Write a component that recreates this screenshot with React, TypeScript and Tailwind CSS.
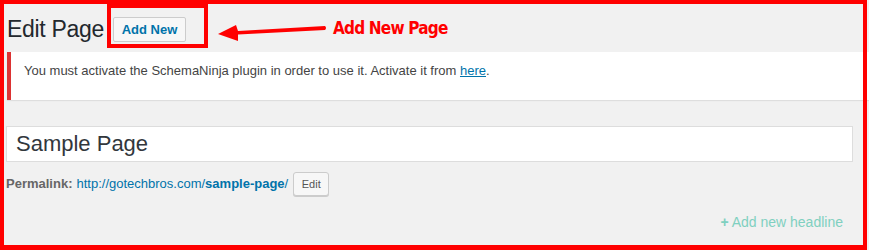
import * as React from "react";

function App() {
  return (
    <div className="relative h-[250px] w-[869px] overflow-hidden bg-[#f1f1f1] font-['Liberation_Sans',Arial,sans-serif] text-[13px] text-[#444]">
      {/* Heading row */}
      <div className="flex h-[52px] items-start pl-[7px] pt-[14px]">
        <h1 className="text-[23px] leading-[30px] tracking-[-0.3px] text-[#23282d]">Edit Page</h1>
        <button className="ml-[9px] mt-[3px] h-[25px] w-[73px] rounded-[2px] border border-[#ccc] bg-[#f7f7f7] text-[13px] font-bold text-[#0073aa]">
          Add New
        </button>
      </div>

      {/* Notice */}
      <div className="ml-[7px] h-[48px] border-l-4 border-[#dc3232] bg-white pl-[13px] pt-[9px] shadow-[0_1px_1px_rgba(0,0,0,0.08)]">
        <p className="leading-[19.5px]">
          You must activate the SchemaNinja plugin in order to use it. Activate it from{" "}
          <a href="#" className="text-[#0073aa] underline">
            here
          </a>
          .
        </p>
      </div>

      {/* Title */}
      <div className="ml-[6px] mt-[26px] flex h-[36px] w-[847px] items-center border border-[#ddd] bg-white pl-[9px]">
        <span className="text-[22px] leading-none text-[#32373c]">Sample Page</span>
      </div>

      {/* Permalink */}
      <div className="mt-[10px] flex items-center pl-[6px]">
        <strong className="text-[#666]">Permalink:</strong>
        <a href="#" className="ml-[4px] text-[#0073aa]">
          http://gotechbros.com/<span className="font-bold">sample-page</span>/
        </a>
        <button className="ml-[5px] h-[24px] w-[36px] rounded-[3px] border border-[#ccc] bg-[#f7f7f7] text-[11px] text-[#555] shadow-[0_1px_0_#ccc]">
          Edit
        </button>
      </div>

      {/* Add headline */}
      <div className="mt-[16px] flex justify-end pr-[26px]">
        <span className="text-[14px] text-[#7fd0c0]">
          <span className="font-bold">+</span> Add new headline
        </span>
      </div>

      {/* Annotation overlay */}
      <div className="pointer-events-none absolute left-0 top-0 h-[250px] w-[867px] border-4 border-b-[5px] border-[#ff0000]" />
      <div className="pointer-events-none absolute left-[107px] top-[4px] h-[44px] w-[101px] border-4 border-[#ff0000]" />
      <svg className="pointer-events-none absolute left-[214px] top-[20px]" width="116" height="26" viewBox="0 0 116 26">
        <path d="M4 14 L22 5 L24 11 L111 6 Q113 8 111 10 L24 14.5 L24 21 Z" fill="#ff0000" />
      </svg>
      <span className="pointer-events-none absolute left-[333px] top-[16px] font-['DejaVu_Sans_Condensed',sans-serif] text-[17px] font-bold tracking-[-0.8px] text-[#ff0000]">
        Add New Page
      </span>
    </div>
  );
}

export default App;
